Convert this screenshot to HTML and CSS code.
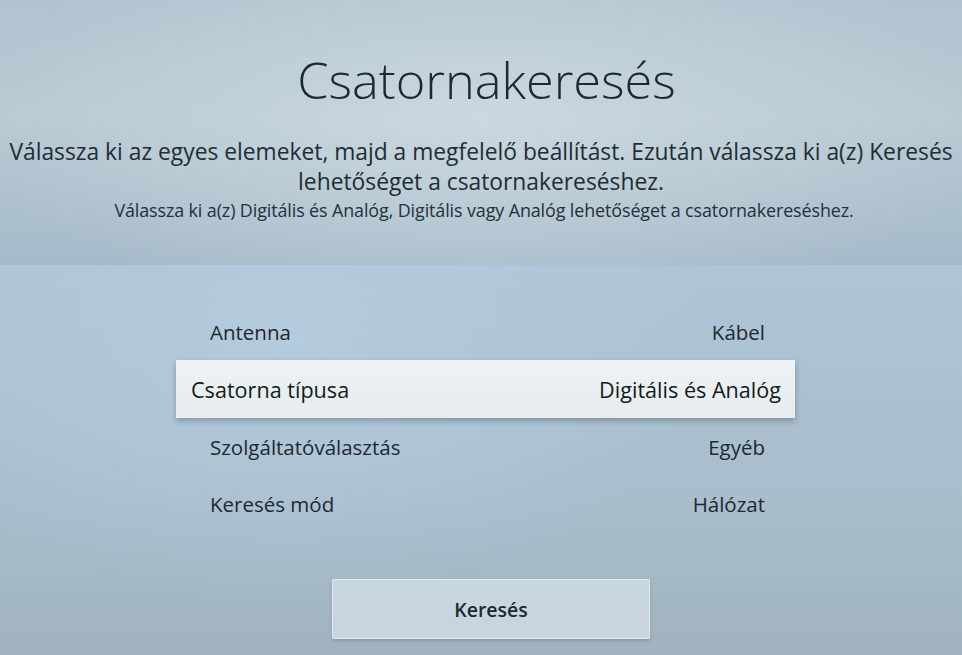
FILE: index.html
```html
<!DOCTYPE html>
<html lang="hu">
<head>
<meta charset="utf-8">
<title>Csatornakeresés</title>
<link rel="stylesheet" href="styles.css">
</head>
<body>
<div class="screen">
  <header class="head">
    <h1 class="title">Csatornakeresés</h1>
    <p class="desc">Válassza ki az egyes elemeket, majd a megfelelő beállítást. Ezután válassza ki a(z) Keresés<br>lehetőséget a csatornakereséshez.</p>
    <p class="hint">Válassza ki a(z) Digitális és Analóg, Digitális vagy Analóg lehetőséget a csatornakereséshez.</p>
  </header>
  <main class="body">
    <ul class="list">
      <li class="row"><span class="label">Antenna</span><span class="value">Kábel</span></li>
      <li class="row focus"><span class="label">Csatorna típusa</span><span class="value">Digitális és Analóg</span></li>
      <li class="row"><span class="label">Szolgáltatóválasztás</span><span class="value">Egyéb</span></li>
      <li class="row"><span class="label">Keresés mód</span><span class="value">Hálózat</span></li>
    </ul>
    <div class="actions">
      <button class="btn" type="button">Keresés</button>
    </div>
  </main>
</div>
</body>
</html>
```

FILE: styles.css
```css
* { box-sizing: border-box; }
html, body { margin: 0; padding: 0; }
body {
  width: 962px;
  height: 655px;
  overflow: hidden;
  font-family: "Open Sans", "Noto Sans", sans-serif;
  color: #1f2b32;
  background: #a9bdca;
}
.screen {
  display: flex;
  flex-direction: column;
  height: 655px;
}
.head {
  height: 265px;
  padding-top: 50px;
  text-align: center;
  background:
    radial-gradient(ellipse 520px 200px at 50% 45%, rgba(210, 222, 228, 0.7), rgba(210, 222, 228, 0) 100%),
    linear-gradient(180deg, #b0c3cf 0%, #b7c9d3 45%, #a6bac9 100%);
}
.title {
  margin: 0;
  padding-left: 11px;
  font-size: 50.5px;
  line-height: 60px;
  font-weight: 300;
  color: #1c2930;
}
.desc {
  margin: 27px 0 0;
  font-size: 22.8px;
  line-height: 30px;
  font-weight: 400;
  color: #1f2d35;
  white-space: nowrap;
}
.hint {
  margin: 3px 0 0;
  padding-left: 6px;
  font-size: 17.9px;
  line-height: 20px;
  color: #22313a;
  letter-spacing: -0.1px;
  white-space: nowrap;
}
.body {
  flex: 1;
  display: flex;
  flex-direction: column;
  align-items: center;
  padding-top: 38px;
  background:
    radial-gradient(ellipse 420px 260px at 30% 20%, rgba(184, 206, 226, 0.7), rgba(184, 206, 226, 0) 100%),
    linear-gradient(180deg, #afc5d6 0%, #a9bdcb 60%, #a0b3bf 100%);
}
.list {
  list-style: none;
  margin: 0 0 0 9px;
  padding: 0;
  width: 619px;
}
.row {
  height: 57px;
  display: flex;
  align-items: center;
  justify-content: space-between;
  padding: 0 30px 0 34px;
  font-size: 20.5px;
  font-weight: 500;
  color: #1d2930;
}
.row.focus {
  height: 58px;
  padding: 0 14px 0 15px;
  font-size: 21.6px;
  background: linear-gradient(180deg, #eef2f4 0%, #e6ecef 100%);
  box-shadow: 0 3px 6px rgba(40, 60, 75, 0.35);
  color: #131b20;
}
.actions {
  margin-top: 47px;
  display: flex;
  justify-content: center;
}
.btn {
  width: 318px;
  height: 60px;
  margin-left: 20px;
  font-family: inherit;
  font-size: 19.5px;
  font-weight: 600;
  color: #1d2930;
  background: rgba(212, 224, 232, 0.75);
  border: 1px solid rgba(228, 236, 241, 0.9);
  border-radius: 2px;
  box-shadow: 0 2px 3px rgba(60, 80, 95, 0.25);
}
```
